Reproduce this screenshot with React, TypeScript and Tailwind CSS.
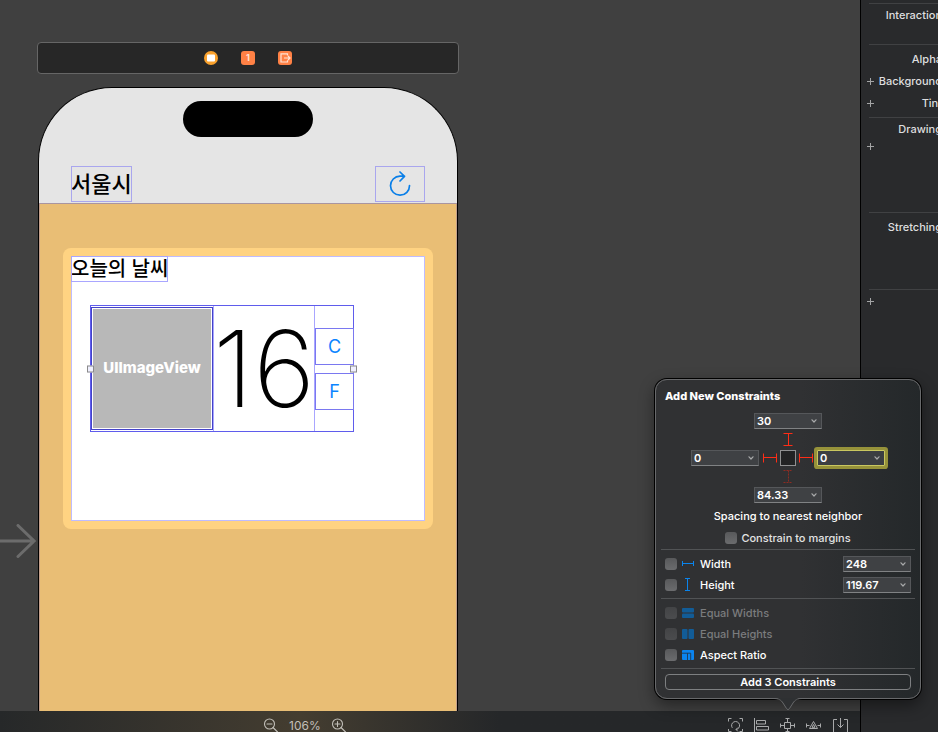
import React from "react";

type ComboProps = {
  label: string;
  value: string;
  focused?: boolean;
};

function Chevron() {
  return (
    <svg viewBox="0 0 6 4" className="h-1 w-1.5" fill="none" stroke="#a9aaab" strokeWidth="1.2" strokeLinecap="round" strokeLinejoin="round">
      <path d="M1 .8 3 3 5 .8" />
    </svg>
  );
}

function Combo({ label, value, focused }: ComboProps) {
  return (
    <div
      className={
        focused
          ? "flex h-4 w-[68px] items-center rounded-[1px] border border-[#c9c760] bg-[#3b3e42] ring-3 ring-[#96923a]"
          : "flex h-4 w-[68px] items-center border border-[#55575a] border-b-[#808284] bg-[#3f4144]"
      }
    >
      <input
        aria-label={label}
        defaultValue={value}
        className="h-3.5 w-full min-w-0 flex-1 bg-transparent pl-0.5 text-[11px] font-semibold text-white outline-none"
      />
      <button type="button" aria-label={`${label} options`} className="flex h-3.5 w-3 items-center justify-center pr-0.5">
        <Chevron />
      </button>
    </div>
  );
}

function Strut({ dashed }: { dashed?: boolean }) {
  return (
    <svg viewBox="0 0 10 13" className="h-[13px] w-2.5" fill="none" stroke={dashed ? "#8e2c22" : "#ff2d16"} strokeDasharray={dashed ? "2 1" : undefined}>
      <path d="M.5 .5H9.5M5.5 .5V12.5M.5 12.5H9.5" />
    </svg>
  );
}

function SideStrut() {
  return (
    <svg viewBox="0 0 14 10" className="h-2.5 w-3.5" fill="none" stroke="#ff2d16">
      <path d="M.5 .5V9.5M.5 4.5H13.5M13.5 .5V9.5" />
    </svg>
  );
}

function Tick({ id, disabled }: { id: string; disabled?: boolean }) {
  return (
    <input
      id={id}
      type="checkbox"
      disabled={disabled}
      className="size-3 shrink-0 appearance-none rounded-[3px] bg-linear-to-b from-[#58595b] to-[#6b6c6e] disabled:from-[#434446] disabled:to-[#4b4c4e]"
    />
  );
}

function WidthIcon() {
  return (
    <svg viewBox="0 0 12 11" className="h-[11px] w-3" fill="none" stroke="#0a84ec">
      <path d="M.5 3v5M.5 5.5h11M11.5 3v5" />
    </svg>
  );
}

function HeightIcon() {
  return (
    <svg viewBox="0 0 12 13" className="h-[13px] w-3" fill="none" stroke="#0a84ec">
      <path d="M3 .5h5M5.5 .5v12M3 12.5h5" />
    </svg>
  );
}

function EqualWidthsIcon() {
  return (
    <svg viewBox="0 0 12 10" className="h-2.5 w-3" fill="#125c97">
      <rect width="12" height="4.5" rx="1" />
      <rect y="5.5" width="12" height="4.5" rx="1" />
    </svg>
  );
}

function EqualHeightsIcon() {
  return (
    <svg viewBox="0 0 12 10" className="h-2.5 w-3" fill="#125c97">
      <rect width="5.5" height="10" rx="1" />
      <rect x="6.5" width="5.5" height="10" rx="1" />
    </svg>
  );
}

function RatioIcon() {
  return (
    <svg viewBox="0 0 12 10" className="h-2.5 w-3">
      <rect width="12" height="10" rx="1" fill="#0a84f0" />
      <path d="M0 3.2H8.7V10M5.5 3.2V10" fill="none" stroke="#20384f" strokeWidth=".9" />
    </svg>
  );
}

type RuleProps = {
  id: string;
  text: string;
  icon: React.ReactNode;
  disabled?: boolean;
  value?: string;
};

function Rule({ id, text, icon, disabled, value }: RuleProps) {
  return (
    <div className="flex h-[21px] items-center px-1">
      <Tick id={id} disabled={disabled} />
      <span className="ml-[5px] flex w-3 justify-center">{icon}</span>
      <label htmlFor={id} className={disabled ? "ml-1.5 text-[#7b7c7e]" : "ml-1.5 text-white"}>
        {text}
      </label>
      {value && (
        <div className="ml-auto">
          <Combo label={`${text} value`} value={value} />
        </div>
      )}
    </div>
  );
}

function Divider() {
  return <hr className="border-t border-[#515355]" />;
}

function ConstraintsPopover() {
  return (
    <section
      aria-label="Add New Constraints"
      className="absolute right-[-61px] bottom-[33px] z-10 w-[266px] rounded-xl border border-[#68696b] bg-linear-to-r from-[#303133] from-55% to-[#24282a] px-[5px] pt-2 pb-2 text-[11px] leading-4 font-medium text-white shadow-[0_0_0_1px_#000,0_6px_16px_rgba(0,0,0,0.45)]"
    >
      <h2 className="px-1 font-extrabold">Add New Constraints</h2>
      <div className="mt-[9px] flex flex-col items-center gap-1">
        <Combo label="Top spacing" value="30" />
        <Strut />
        <div className="flex items-center">
          <Combo label="Leading spacing" value="0" />
          <span className="pr-[3px] pl-1"><SideStrut /></span>
          <button type="button" aria-label="Selected view" className="size-4 border border-[#8f9091] bg-[#222324]" />
          <span className="pr-1 pl-[3px]"><SideStrut /></span>
          <Combo label="Trailing spacing" value="0" focused />
        </div>
        <Strut dashed />
        <Combo label="Bottom spacing" value="84.33" />
      </div>
      <p className="mt-[5px] text-center">Spacing to nearest neighbor</p>
      <div className="mt-1.5 mb-[3px] flex items-center justify-center gap-1">
        <Tick id="margins" />
        <label htmlFor="margins" className="text-[#e3e3e3]">Constrain to margins</label>
      </div>
      <Divider />
      <div className="py-[3px]">
        <Rule id="width" text="Width" icon={<WidthIcon />} value="248" />
        <Rule id="height" text="Height" icon={<HeightIcon />} value="119.67" />
      </div>
      <Divider />
      <div className="py-[3px]">
        <Rule id="eqw" text="Equal Widths" icon={<EqualWidthsIcon />} disabled />
        <Rule id="eqh" text="Equal Heights" icon={<EqualHeightsIcon />} disabled />
        <Rule id="ratio" text="Aspect Ratio" icon={<RatioIcon />} />
      </div>
      <Divider />
      <div className="px-1 pt-[5px]">
        <button type="button" className="flex h-4 w-full items-center justify-center rounded-[4px] border border-[#7d7f81] font-semibold">
          Add 3 Constraints
        </button>
      </div>
      <svg viewBox="0 0 30 14" className="absolute top-full left-1/2 h-3.5 w-[30px] -translate-x-1/2">
        <path d="M0 0H30C24 0 22 2 20 5L16.500 11Q15 13 13.500 11L10 5C8 2 6 0 0 0Z" fill="#2e3032" />
        <path d="M0 .5C6 .5 8 2 10 5L13.500 10.500Q15 13 16.500 10.500L20 5C22 2 24 .5 30 .5" fill="none" stroke="#68696b" />
      </svg>
    </section>
  );
}

function SceneDock() {
  return (
    <div className="-mr-px -ml-px flex h-8 items-center justify-center gap-[22px] rounded-[4px] border border-[#666666] bg-[#272727]">
      <svg viewBox="0 0 16 16" className="size-4">
        <circle cx="8" cy="8" r="7" fill="#f9a12c" />
        <rect x="4" y="4.500" width="8" height="7" rx="1" fill="#fff" />
      </svg>
      <span className="flex size-3.5 items-center justify-center rounded-[3px] bg-[#ff8145] text-[9px] font-bold text-[#ffe3d4]">1</span>
      <svg viewBox="0 0 16 16" className="size-4" fill="none" stroke="#ffe3d4" strokeWidth="1.200">
        <rect x="1" y="1" width="14" height="14" rx="3" fill="#ff8145" stroke="none" />
        <path d="M10.500 5.500V3.800H4V12h6.500v-1.700M7 8h6M11 6l2 2-2 2" />
      </svg>
    </div>
  );
}

function Handle({ side }: { side: "left" | "right" }) {
  return (
    <span
      className={
        side === "left"
          ? "absolute top-1/2 -left-1 size-[7px] -translate-y-1/2 border border-[#8a8a8a] bg-[#f0f0ff]"
          : "absolute top-1/2 -right-1 size-[7px] -translate-y-1/2 border border-[#8a8a8a] bg-[#f0f0ff]"
      }
    />
  );
}

function Phone() {
  return (
    <div className="mt-[13px] flex flex-1 flex-col overflow-hidden rounded-t-[74px] border border-b-0 border-black bg-[#e5e5e5] text-black">
      <div className="flex h-[116px] flex-col border-b border-[#a995a0] pt-[13px]">
        <div className="mx-auto h-9 w-[130px] rounded-full bg-black" />
        <div className="mt-auto flex h-[37px] justify-between px-8 pb-px">
          <h1 className="flex items-center text-[22px] leading-none font-medium outline-1 -outline-offset-1 outline-[#a9a6ee]">서울시</h1>
          <button type="button" aria-label="Refresh" className="flex w-[50px] items-center justify-center border border-[#a9a6ee]">
            <svg viewBox="0 0 24 26" className="h-[26px] w-6" fill="none" stroke="#0a7fe8" strokeWidth="1.700" strokeLinecap="round" strokeLinejoin="round">
              <path d="M21.500 14.500A9.500 9.500 0 1 1 12 5.200H16.500M12 1l4.500 4.300L12 10" />
            </svg>
          </button>
        </div>
      </div>
      <div className="flex-1 border-x border-[#c29f8b] bg-[#e9be75] px-[23px] pt-11">
        <div className="rounded-lg bg-[#ffd382] p-2">
          <div className="h-[265px] border border-[#bfbcff] bg-white">
            <h2 className="-mt-px -ml-px flex h-[26px] w-fit items-center text-[20px] leading-none font-medium outline-1 -outline-offset-1 outline-[#a9a6ff]">오늘의 날씨</h2>
            <div className="relative mt-[23px] ml-[18px] flex h-[127px] w-[264px] items-center border border-[#5f5cec]">
              <div className="h-[123px] w-[122px] shrink-0 border border-[#4442c8] bg-white p-px">
                <div className="flex h-full items-center justify-center bg-[#b8b8b8] text-[15px] font-extrabold text-white">UIImageView</div>
              </div>
              <div className="flex h-full min-w-0 flex-1 items-center justify-center border-x border-[#a9a6ff] text-[106px] leading-none font-extralight">16</div>
              <div className="-mr-px flex w-[39px] shrink-0 flex-col gap-2 text-[18px] text-[#0a84ff]">
                <button type="button" className="h-[37px] border border-[#7a78f0]">C</button>
                <button type="button" className="h-[37px] border border-[#7a78f0]">F</button>
              </div>
              <Handle side="left" />
              <Handle side="right" />
            </div>
          </div>
        </div>
      </div>
    </div>
  );
}

function Magnifier({ plus }: { plus?: boolean }) {
  return (
    <svg viewBox="0 0 16 16" className="size-4" fill="none" stroke="#c2bfb8" strokeWidth="1.100" strokeLinecap="round">
      <circle cx="6.500" cy="6" r="5" />
      <path d={plus ? "M10 9.500 14.500 14M4 6h5M6.500 3.500v5" : "M10 9.500 14.500 14M4 6h5"} />
    </svg>
  );
}

function Tool({ label, children }: { label: string; children: React.ReactNode }) {
  return (
    <button type="button" aria-label={label} className="size-4">
      <svg viewBox="0 0 16 16" className="size-4" fill="none" stroke="#a9aaab">
        {children}
      </svg>
    </button>
  );
}

function BottomBar() {
  return (
    <footer className="relative flex h-[21px] items-start justify-end bg-linear-to-r from-[#262829] via-[#443d30] via-35% to-[#252729] to-58% pt-1.5">
      <div className="absolute top-[7px] left-[263px] flex items-center gap-2.5 text-[12px] leading-4 text-[#c2bfb8]">
        <button type="button" aria-label="Zoom out"><Magnifier /></button>
        <span>106%</span>
        <button type="button" aria-label="Zoom in"><Magnifier plus /></button>
      </div>
      <div className="flex gap-2.5 pr-3">
        <Tool label="Update Frames">
          <path d="M.5 4.500V1.500h3M11.500 1.500h3v3M.5 12v2.500h3M14.500 12v2.500h-3M4.300 10.800A4 4 0 1 1 8 12.500M10 10.500 8 12.500l2 2" />
        </Tool>
        <Tool label="Align">
          <path d="M.5 1v15M2.500 3.500h9v3.500h-9zM2.500 9.500h12v3.500h-12z" />
        </Tool>
        <Tool label="Add New Constraints">
          <path d="M4.500 5.500h6v6h-6zM7.500 1.500v4M5.500 1.500h4M7.500 11.500v3M5.500 14.500h4M.5 8.500h4M.5 6.500v4M10.500 8.500h4M14.500 6.500v4" />
        </Tool>
        <Tool label="Resolve Auto Layout Issues">
          <path d="M7.500 4.500 11.500 11.500h-8zM7.500 7.500 9 10.300H6zM.5 8.500h3M.5 6.500v4M11.500 8.500h3M14.500 6.500v4" />
        </Tool>
        <Tool label="Embed In">
          <path d="M5 2.500H1.500v13h14v-13H12M8.500 1v9.500M5.500 7.500l3 3 3-3" />
        </Tool>
      </div>
      <ConstraintsPopover />
    </footer>
  );
}

function Attribute({ text, plus }: { text?: string; plus?: boolean }) {
  return (
    <div className="flex h-[22px] w-[81px] items-center justify-between pl-[6px]">
      {plus ? (
        <button type="button" aria-label={`Add ${text ?? "variation"}`} className="size-[7px]">
          <svg viewBox="0 0 7 7" className="size-[7px]" stroke="#a3a4a5">
            <path d="M3.500 0v7M0 3.500h7" />
          </svg>
        </button>
      ) : (
        <span />
      )}
      <span>{text}</span>
    </div>
  );
}

function Inspector() {
  return (
    <aside className="w-[78px] shrink-0 overflow-hidden border-l border-black bg-[#292a2c] pt-[3px] text-[11px] leading-4 font-medium text-[#dededf]">
      <div className="ml-2 h-px bg-[#404143]" />
      <Attribute text="Interaction" />
      <div className="mt-[18px] ml-2 h-px bg-[#404143]" />
      <div className="pt-[3px]">
        <Attribute text="Alpha" />
        <Attribute text="Background" plus />
        <Attribute text="Tint" plus />
      </div>
      <div className="mt-[3px] ml-2 h-px bg-[#404143]" />
      <Attribute text="Drawing" />
      <div className="-mt-[5px]"><Attribute plus /></div>
      <div className="mt-[55px] ml-2 h-px bg-[#404143]" />
      <div className="mt-[3px]"><Attribute text="Stretching" /></div>
      <div className="mt-[51px] ml-2 h-px bg-[#404143]" />
      <Attribute plus />
    </aside>
  );
}

export default function App() {
  return (
    <div className="flex h-screen overflow-hidden bg-[#404040] font-['Inter','Noto_Sans_CJK_KR',sans-serif]">
      <main className="flex min-w-0 flex-1 flex-col">
        <div className="relative flex min-h-0 flex-1 flex-col pl-[38px]">
          <svg viewBox="0 0 36 34" className="absolute top-[524px] left-0 h-[34px] w-9" fill="none" stroke="#6c6c6c" strokeWidth="3" strokeLinecap="round">
            <path d="M0 17H34M18 1.500 34 17 18 32.500" />
          </svg>
          <div className="flex min-h-0 w-[420px] flex-1 flex-col pt-[42px]">
            <SceneDock />
            <Phone />
          </div>
        </div>
        <BottomBar />
      </main>
      <Inspector />
    </div>
  );
}
